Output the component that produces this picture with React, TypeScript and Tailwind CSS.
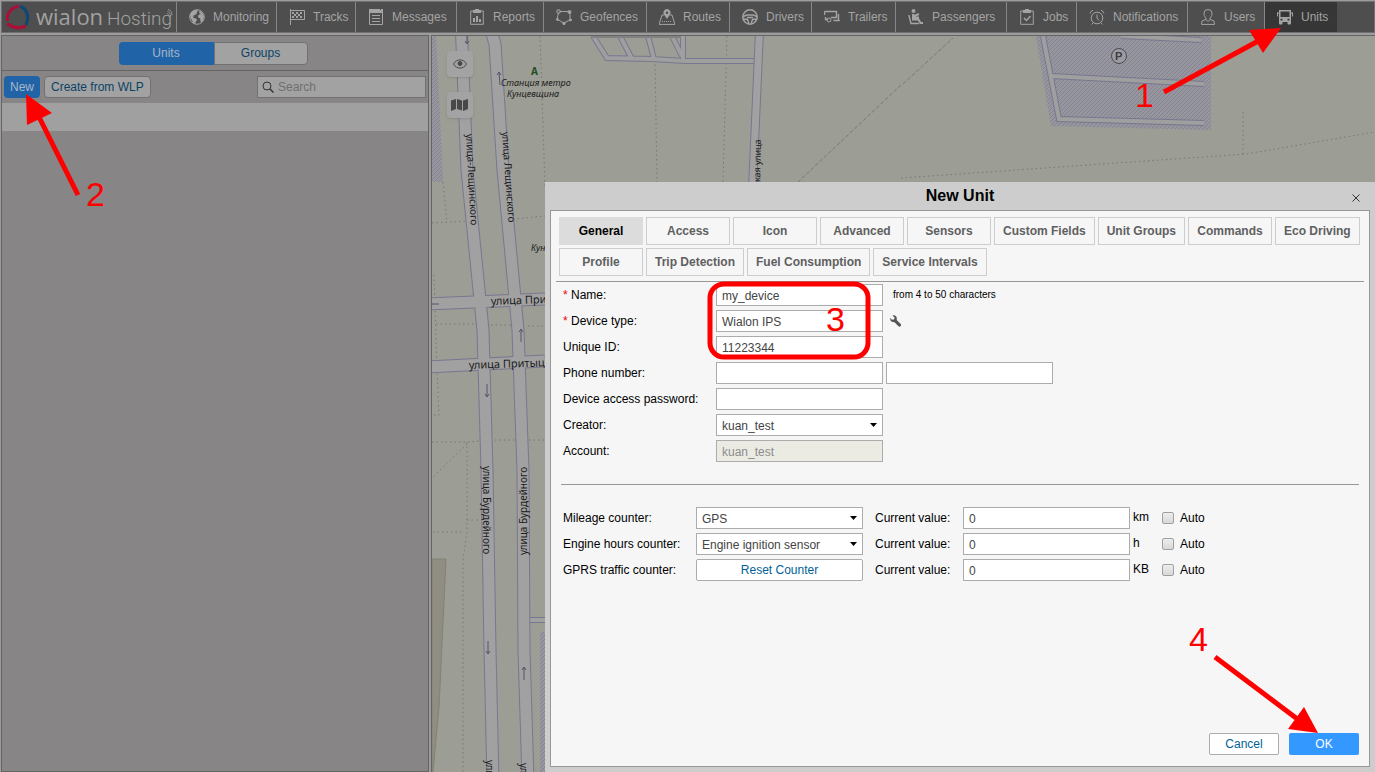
import { useState, type ReactNode } from 'react';

const NAV: { label: string; width: string; icon: ReactNode }[] = [
  {
    label: 'Monitoring', width: 'w-[100px]',
    icon: (
      <>
        <circle cx="8" cy="8" r="7.3" />
        <path fill="currentColor" stroke="none" d="M1 6 2.500 3 5 1.200 8 1l1 1.300L7.500 3.500l.5 1L6 6l-1.500.2L5 7.500H3.800L4.500 9l2.500.5 1 1.500-1.500 2v2L4 14l-1-3-1.500-2zM10 2l2 .5 2 2.500 1 3-1 3.500-2 2-.8-2.500.3-1.500-2-.7L9 7l1-1.500 2-.2-1.500-1z" />
      </>
    ),
  },
  {
    label: 'Tracks', width: 'w-[79px]',
    icon: (
      <>
        <path d="M1.500 0v16M1.500 1.500h14v9h-14" />
        <path fill="currentColor" stroke="none" d="M3 3h2v2H3zM7 3h2v2H7zM11 3h2v2h-2zM5 5h2v2H5zM9 5h2v2H9zM3 7h2v2H3zM7 7h2v2H7zM11 7h2v2h-2z" />
      </>
    ),
  },
  {
    label: 'Messages', width: 'w-[101px]',
    icon: (
      <>
        <path d="M1.500 1v14.500h13V1" />
        <path fill="currentColor" stroke="none" d="M1 0h11v1h1V0h2v4H1zM4 6h8v1H4zM4 9h8v1H4zM4 12h8v1H4z" />
      </>
    ),
  },
  {
    label: 'Reports', width: 'w-[87px]',
    icon: (
      <>
        <path d="M5 2H1.700v13.300h12.600V2H11" />
        <path fill="currentColor" stroke="none" d="M4 1h2V0h4v1h2v3H4zM4 9h2v4H4zM7 7h2v6H7zM10 10h2v3h-2z" />
      </>
    ),
  },
  {
    label: 'Geofences', width: 'w-[103px]',
    icon: (
      <>
        <path d="M1 1h3v3H1zM4 2.500h8M2.500 4 1 10l6.500 4L14 11V4" />
        <circle cx="13.500" cy="3" r="1.500" fill="currentColor" />
        <circle cx="1.500" cy="10.500" r="1" fill="currentColor" />
        <circle cx="8" cy="14.500" r="1.200" fill="currentColor" />
        <circle cx="14.500" cy="11" r="1" fill="currentColor" />
      </>
    ),
  },
  {
    label: 'Routes', width: 'w-[83px]',
    icon: (
      <>
        <path d="M5 6H3L0 15.400h16L13 6h-2" />
        <path d="M8 10 5 5.500a3.500 3.500 0 1 1 6 0z" fill="currentColor" stroke="none" />
        <circle cx="8" cy="3.700" r="1.300" className="fill-[#4e4e4e]" stroke="none" />
        <path d="M3 12.500h10" strokeDasharray="1 1" />
      </>
    ),
  },
  {
    label: 'Drivers', width: 'w-[82px]',
    icon: (
      <>
        <circle cx="8" cy="8" r="7.200" strokeWidth="1.500" />
        <path d="M1 7.500 5 6h6l4 1.500M1.500 10l4 .5L7 15M14.500 10l-4 .5L9 15M5 8.500h6" strokeWidth="1.400" />
      </>
    ),
  },
  {
    label: 'Trailers', width: 'w-[84px]',
    icon: (
      <>
        <path d="M4 10.500H1.500V8M.5 2.500h12v6H7M14.500 5v6.500h-5M.5 2.500V6" strokeWidth="1.400" />
        <circle cx="5" cy="11" r="2" />
        <path d="M12 11.500h4" />
      </>
    ),
  },
  {
    label: 'Passengers', width: 'w-[111px]',
    icon: (
      <>
        <circle cx="5.500" cy="2" r="2" fill="currentColor" stroke="none" />
        <path d="M5 5v5.500h5.500l2 3.500h2.500M6 7l5-2M6 8.500h5" strokeWidth="2" />
        <path d="m.8 6 2.200 8.500h8" strokeWidth="1.400" />
      </>
    ),
  },
  {
    label: 'Jobs', width: 'w-[70px]',
    icon: (
      <>
        <path d="M5 2H1.700v13.300h12.600V2H11" />
        <path fill="currentColor" stroke="none" d="M4 1h2V0h4v1h2v3H4z" />
        <path d="m5 9 2.500 2.500L11.500 7" strokeWidth="1.500" />
      </>
    ),
  },
  {
    label: 'Notifications', width: 'w-[111px]',
    icon: (
      <>
        <circle cx="8" cy="9" r="5.800" />
        <path d="M8 5.500V9l2 2.500M1 4.500A5 5 0 0 1 4 1.200M15 4.500a5 5 0 0 0-3-3.300M4 14l-1.500 1.500M12 14l1.500 1.500" />
      </>
    ),
  },
  {
    label: 'Users', width: 'w-[77px]',
    icon: <path d="M6 9C4 7 4 5.500 4 4a4 3.500 0 0 1 8 0c0 1.500 0 3-2 5v1.500l4 1.500.500 3.400h-13L2 12l4-1.500zM6 10.500l2 2 2-2" />,
  },
  {
    label: 'Units', width: 'w-[72px]',
    icon: (
      <>
        <path fill="currentColor" stroke="none" fillRule="evenodd" d="M2 1h12v13.500a1 1 0 0 1-1 1h-1.500a1 1 0 0 1-1-1V13h-5v1.500a1 1 0 0 1-1 1H3a1 1 0 0 1-1-1zM3.500 2.500V8h9V2.500zM3.500 9.800v1.700h2V9.800zm7 0v1.700h2V9.800z" />
        <path d="M.5 3.500v4M15.500 3.500v4M.5 4h2M13.500 4h2" />
      </>
    ),
  },
];

const TABS = [
  'General', 'Access', 'Icon', 'Advanced', 'Sensors', 'Custom Fields', 'Unit Groups', 'Commands',
  'Eco Driving', 'Profile', 'Trip Detection', 'Fuel Consumption', 'Service Intervals',
];

const FIELD = 'h-[22px] w-[167px] rounded-none border border-[#acacac] bg-white px-[5px] pt-[2px] text-xs text-[#444] outline-none';

function Logo() {
  return (
    <a href="#home" aria-label="Wialon Hosting" className="flex h-full w-[175px] shrink-0 items-center border-r border-[#878787]">
      <svg width="174" height="30" viewBox="2 2 174 30" fill="none">
        <path d="M7.500 21C6.500 14 11 7 19 6.300" stroke="#a81038" strokeWidth="3" />
        <path d="M8.500 24.500c4 3.500 11 4 16 2" stroke="#a81038" strokeWidth="3.500" strokeLinecap="round" />
        <path d="M20 6.500C27 8 29.500 17 26 25" stroke="#0b4878" strokeWidth="3" />
        <text x="36" y="25" fontSize="22" fontWeight="500" fill="#a2a2a2" fontFamily="'Open Sans', sans-serif">wialon</text>
        <text x="107" y="25" fontSize="19" fontWeight="300" fill="#a2a2a2" fontFamily="Roboto, sans-serif">Hosting</text>
        <path d="M167 13.500c1 .3 1.500 1 1.500 2.500M167.500 11.500c2 .3 2.800 2 2.800 4M168 9.500c3 .3 4 3 4 6" stroke="#a2a2a2" strokeWidth=".8" />
      </svg>
    </a>
  );
}

function Header() {
  return (
    <header className="flex h-8 shrink-0 border border-[#707070] bg-[#4e4e4e] text-xs text-[#a4a4a4]">
      <Logo />
      <nav className="flex min-w-0 flex-1">
        {NAV.map((item) => (
          <a key={item.label} href={`#${item.label.toLowerCase()}`}
            className={`flex shrink-0 items-center gap-2 pl-3 ${item.width} ${item.label === 'Units' ? 'bg-[#363636]' : 'border-r border-[#878787]'}`}>
            <svg width="16" height="16" viewBox="0 0 16 16" fill="none" stroke="currentColor" aria-hidden="true">{item.icon}</svg>
            {item.label}
          </a>
        ))}
      </nav>
    </header>
  );
}

function Sidebar() {
  return (
    <aside className="w-[428px] shrink-0 border border-[#646465] bg-[#888586] text-xs">
      <div className="flex h-[35px] items-center justify-center border-b border-[#646465] pr-1">
        <button className="h-[23px] w-[95px] rounded-l-sm bg-[#2063a7] text-[#a8b8c8]">Units</button>
        <button className="h-[23px] w-[94px] rounded-r-sm border border-[#717171] bg-[#a2a2a2] text-[#0b4366]">Groups</button>
      </div>
      <div className="flex h-8 items-center gap-1 px-[2px]">
        <button className="h-[22px] rounded-sm bg-[#2063a7] px-[6px] text-[#a8b8c8]">New</button>
        <button className="h-[22px] rounded-sm border border-[#717171] bg-[#a2a2a2] px-[6px] text-[#0b4366]">Create from WLP</button>
        <label className="ml-auto flex h-[22px] w-[169px] items-center gap-1 border border-[#717171] bg-[#a2a2a2] px-1">
          <svg width="12" height="12" viewBox="0 0 12 12" fill="none" stroke="#333" aria-hidden="true">
            <circle cx="5" cy="5" r="4" />
            <path d="m8 8 3.500 3.500" strokeWidth="1.500" />
          </svg>
          <input aria-label="Search" placeholder="Search" className="min-w-0 flex-1 bg-transparent outline-none placeholder:text-[#707070]" />
        </label>
      </div>
      <div className="h-7 bg-[#a0a0a0]" />
    </aside>
  );
}

const ROADS = [
  'M461 20 467 170 483 330 487 470 490 650 493 780',
  'M488 20 495 44 503 170 518 330 523 470 524 650 528 780',
  'M760 20 752 200',
  'M425 304 545 299',
  'M425 367 545 361',
];

function StreetMap() {
  return (
    <svg className="h-full w-full" viewBox="432 36 943 736" preserveAspectRatio="xMinYMin slice" fill="none" aria-label="Map">
      <defs>
        <pattern id="hatch" width="4" height="4" patternUnits="userSpaceOnUse">
          <path d="M-1 5 5-1M-1 1l2-2M3 5l2-2" stroke="#7d7d96" strokeWidth=".8" />
        </pattern>
      </defs>
      <path d="M432 36h943v736H432z" fill="#9c9d95" />
      <g fill="#96969c">
        <path d="M432 36h4l7 146h-11z" />
        <path d="M1036 36h175v94l-160-4z" />
        <path d="M540 632h8v140h-8z" />
      </g>
      <g fill="url(#hatch)">
        <path d="M432 36h4l7 146h-11z" />
        <path d="M1036 36h175v94l-160-4z" />
        <path d="M540 632h8v140h-8z" />
      </g>
      <path d="M432 559h14l-7 148-6 65h-1z" fill="#908e82" stroke="#838175" />

      {/* footpaths */}
      <g stroke="#7c7770" strokeDasharray="1.500 3">
        <path d="M540 36l5 150M655 60l2 122M727 36l-4 146M443 182l4 40M432 223l36-2M513 219l32-3M434 275l3 94M436 324h42M491 325h25M528 326h17M437 369l2 46h-7M432 442h36l12-1M495 440h22M529 440h16M467 442v90l-4 28v212M467 520h13M433 532h30M467 444l-35 34" />
        <path d="M901 178l345-24 129-22M1243 112v42" />
        <path d="M903 84l50-46M901 85l-104 98" strokeDasharray="4 2" />
      </g>

      {/* blocks of parking lanes */}
      <g stroke="#777790" strokeWidth="6">
        <path d="M593 36l14 22 45 1 33 2h70M620 36l12 23M648 36l6 23M672 36l10 20M683 36v23" />
        <path d="M1043 36l16 83 145 4M1051 76l153 8M1122 36l79 4" />
      </g>
      <g stroke="#9f9f9f" strokeWidth="4">
        <path d="M593 36l14 22 45 1 33 2h70M620 36l12 23M648 36l6 23M672 36l10 20M683 36v23" />
        <path d="M1043 36l16 83 145 4M1051 76l153 8M1122 36l79 4" />
      </g>
      <path d="M591 37h90" stroke="#828282" strokeWidth="2" />
      <path d="M528 620h20" stroke="#777790" strokeWidth="6" />
      <path d="M528 620h20" stroke="#a1a1a1" strokeWidth="4" />

      <g stroke="#777790">{ROADS.map((d) => <path key={d} d={d} strokeWidth={d.startsWith('M760') ? 9 : 13} />)}</g>
      <g stroke="#a1a1a1">{ROADS.map((d) => <path key={d} d={d} strokeWidth={d.startsWith('M760') ? 7 : 11} />)}</g>

      {/* one-way arrows */}
      <g stroke="#55556a">
        <path d="M467 36v8m-2-3 2 3 2-3M500 85l-1-13m-2 3 2-3 2 3M521 342v-13m-2 3 2-3 2 3M487 384v13m-2-3 2 3 2-3M488 641v13m-2-3 2 3 2-3M524 680v-13m-2 3 2-3 2 3M432 304h7" />
      </g>

      <g fill="#1b1b1b" fontSize="10" fontFamily="'Noto Sans', sans-serif">
        <text transform="translate(466 134) rotate(87)">улица-Лещинского</text>
        <text transform="translate(502 132) rotate(86)">улица Лещинского</text>
        <text transform="translate(483 466) rotate(90)">улица Бурдейного</text>
        <text transform="translate(527 555) rotate(-90)">улица Бурдейного</text>
        <text transform="translate(760 192) rotate(-89)" fontSize="9">нская улица</text>
        <text transform="translate(486 760) rotate(90)">улица</text>
        <text transform="translate(520 763) rotate(90)">улица</text>
        <text transform="translate(491 305) rotate(-2)" fontSize="11">улица Притыцкого</text>
        <text transform="translate(469 369) rotate(-2)" fontSize="11">улица Притыцкого</text>
        <g fontSize="9" fontStyle="italic">
          <text x="501" y="86">Станция метро</text>
          <text x="507" y="97">Кунцевщина</text>
          <text x="531" y="251">Кунцевщина</text>
        </g>
        <text x="531" y="75" fontWeight="700" fill="#204f1c">A</text>
      </g>
      <circle cx="1119" cy="56" r="7.500" fill="#9c9ca0" stroke="#4a4a5a" />
      <text x="1115" y="60" fontSize="11" fontWeight="700" fill="#3c3c48" fontFamily="'Liberation Sans', sans-serif">P</text>
    </svg>
  );
}

function MapPanel() {
  return (
    <main className="relative min-w-0 flex-1 overflow-hidden border-l border-t border-[#646465]">
      <StreetMap />
      <div className="absolute left-[15px] top-[15px] flex flex-col gap-[15px]">
        <button aria-label="Visible layers" className="flex size-[26px] items-center justify-center rounded-sm bg-[#a3a3a3] shadow">
          <svg width="14" height="10" viewBox="0 0 14 10" fill="none" stroke="#484848">
            <path d="M.5 5C3.500-.5 10.500-.5 13.500 5 10.500 10.500 3.500 10.500.5 5z" />
            <circle cx="7" cy="4.500" r="2" fill="#484848" />
          </svg>
        </button>
        <button aria-label="Map source" className="flex size-[26px] items-center justify-center rounded-sm bg-[#a3a3a3] shadow">
          <svg width="18" height="14" viewBox="0 0 18 14" fill="#484848">
            <path d="M0 2.500 5 1v10L0 13zM6 1l5 1.500v10L6 11zM12 2.500 17 1v10l-5 2z" />
          </svg>
        </button>
      </div>
    </main>
  );
}

function Select({ id, options }: { id: string; options: string[] }) {
  return (
    <div className="relative h-[22px] w-[167px]">
      <select id={id} className={`${FIELD} appearance-none`}>
        {options.map((o) => <option key={o}>{o}</option>)}
      </select>
      <svg width="7" height="4" viewBox="0 0 7 4" className="pointer-events-none absolute right-[6px] top-[9px]">
        <path d="M0 0h7L3.500 4z" />
      </svg>
    </div>
  );
}

function FormRow({ id, label, required, children }: { id: string; label: string; required?: boolean; children: ReactNode }) {
  return (
    <div className="flex">
      <label htmlFor={id} className="w-[153px] leading-[22px]">
        {required && <span className="text-red-600">* </span>}
        {label}:
      </label>
      <div className="flex items-center gap-[3px]">{children}</div>
    </div>
  );
}

function CounterRow({ id, label, unit, children }: { id: string; label: string; unit: string; children: ReactNode }) {
  return (
    <div className="flex leading-[22px]">
      <label htmlFor={id} className="w-[133px]">{label}:</label>
      {children}
      <label htmlFor={`${id}-value`} className="ml-3 w-[88px]">Current value:</label>
      <input id={`${id}-value`} defaultValue="0" className={FIELD} />
      <span className="w-8 pl-[3px] leading-5">{unit}</span>
      <label className="flex items-center gap-[6px]">
        <input type="checkbox"
          className="size-3 appearance-none rounded-xs border border-[#a0a0a0] bg-linear-to-b from-[#eee] to-[#d8d8d8] checked:bg-[#3398ff]" />
        Auto
      </label>
    </div>
  );
}

function NewUnitDialog() {
  const [tab, setTab] = useState('General');
  return (
    <section role="dialog" aria-labelledby="dialog-title"
      className="absolute bottom-0 left-[545px] right-0 top-[182px] flex flex-col bg-[#cdcdcd] px-[5px] pb-[5px] text-xs text-black">
      <div className="relative flex h-7 shrink-0 items-center justify-center">
        <h2 id="dialog-title" className="text-base font-bold">New Unit</h2>
        <button aria-label="Close" className="absolute right-[10px] top-3">
          <svg width="8" height="8" viewBox="0 0 8 8" stroke="#333"><path d="m.5.500 7 7m0-7-7 7" /></svg>
        </button>
      </div>

      <div className="flex flex-1 flex-col border border-[#979797] bg-[#f6f6f6] px-[5px] pt-[6px]">
        <div role="tablist" className="flex flex-wrap gap-[3px] border-b border-[#979797] pb-[5px] pl-[3px]">
          {TABS.map((t) => (
            <button key={t} role="tab" aria-selected={t === tab} onClick={() => setTab(t)}
              className={`h-7 min-w-[84px] border px-2 font-bold ${t === tab ? 'border-[#dcdcdc] bg-[#dcdcdc] text-black' : 'border-[#cdcdcd] text-[#606060]'}`}>
              {t}
            </button>
          ))}
        </div>

        <form className="flex flex-1 flex-col px-[5px]" onSubmit={(e) => e.preventDefault()}>
          <div className="flex flex-col gap-1 border-b border-[#979797] pb-[22px] pl-[2px] pt-[2px]">
            <FormRow id="name" label="Name" required>
              <input id="name" defaultValue="my_device" className={FIELD} />
              <span className="pl-[7px] text-[10px]">from 4 to 50 characters</span>
            </FormRow>
            <FormRow id="device" label="Device type" required>
              <input id="device" defaultValue="Wialon IPS" className={FIELD} />
              <button type="button" aria-label="Device settings" className="pl-1">
                <svg width="12" height="12" viewBox="0 0 12 12" fill="#555">
                  <path d="M2.500.5 4.700 2.700 4 4.500l-2 .3L.2 3C-.3 5.500 1.800 7.700 4.200 7l4.300 4.300c1.300 1.300 3.500-.8 2.200-2.200L6.700 5C7.500 2 5.200-.4 2.500.5z" />
                </svg>
              </button>
            </FormRow>
            <FormRow id="uid" label="Unique ID">
              <input id="uid" defaultValue="11223344" className={FIELD} />
            </FormRow>
            <FormRow id="phone" label="Phone number">
              <input id="phone" className={FIELD} />
              <input aria-label="Second phone number" className={FIELD} />
            </FormRow>
            <FormRow id="password" label="Device access password">
              <input id="password" type="password" className={FIELD} />
            </FormRow>
            <FormRow id="creator" label="Creator">
              <Select id="creator" options={['kuan_test']} />
            </FormRow>
            <FormRow id="account" label="Account">
              <input id="account" disabled defaultValue="kuan_test"
                className="h-[22px] w-[167px] border border-[#acacac] bg-[#ebebe4] px-[5px] pt-[2px] text-[#8c8c8c]" />
            </FormRow>
          </div>

          <div className="flex flex-col gap-1 pl-[2px] pt-[22px]">
            <CounterRow id="mileage" label="Mileage counter" unit="km">
              <Select id="mileage" options={['GPS', 'Mileage sensor', 'Odometer']} />
            </CounterRow>
            <CounterRow id="engine" label="Engine hours counter" unit="h">
              <Select id="engine" options={['Engine ignition sensor', 'Engine hours sensor']} />
            </CounterRow>
            <CounterRow id="gprs" label="GPRS traffic counter" unit="KB">
              <button id="gprs" type="button" className="h-[22px] w-[167px] rounded-xs border border-[#acacac] bg-white leading-5 text-[#005f98]">
                Reset Counter
              </button>
            </CounterRow>
          </div>

          <div className="mt-auto flex justify-end gap-[10px] pb-[11px]">
            <button type="button" className="h-[22px] w-[70px] rounded-xs border border-[#acacac] bg-white text-[#005f98]">Cancel</button>
            <button type="submit" className="h-[22px] w-[70px] rounded-xs bg-[#3398ff] text-white">OK</button>
          </div>
        </form>
      </div>
    </section>
  );
}

/* numbered walkthrough marks drawn over the page */
function Steps() {
  return (
    <svg width="1375" height="772" viewBox="0 0 1375 772" className="pointer-events-none absolute left-0 top-0" aria-hidden="true">
      <g stroke="#f00" strokeWidth="5" fill="none">
        <path d="M1164 92 1262 39M78 195 38 115M1215 657 1300 721" />
        <rect x="710" y="284" width="158" height="73" rx="14" />
      </g>
      <g fill="#f00">
        <path d="M1249 30 1281 28 1263 53zM26 94 52 113 27 125zM1304 707 1318 733 1288 729z" />
        <g fontSize="34" fontFamily="'Liberation Sans', sans-serif">
          <text x="1135" y="107">1</text>
          <text x="86" y="206">2</text>
          <text x="826" y="331">3</text>
          <text x="1189" y="651">4</text>
        </g>
      </g>
    </svg>
  );
}

export default function App() {
  return (
    <div className="relative flex h-screen flex-col overflow-hidden bg-[#9c9c9c] pl-px pt-px font-['Liberation_Sans',Arial,sans-serif]">
      <Header />
      <div className="mt-[2px] flex min-h-0 flex-1 gap-[2px]">
        <Sidebar />
        <MapPanel />
      </div>
      <NewUnitDialog />
      <Steps />
    </div>
  );
}
